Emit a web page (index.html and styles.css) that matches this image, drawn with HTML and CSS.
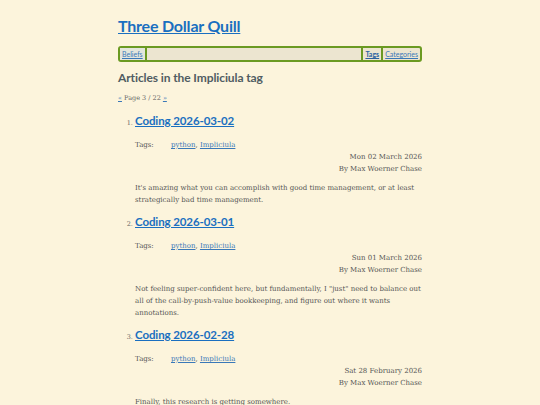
FILE: index.html
```html
<!DOCTYPE html>
<html>
<head>
<meta charset="utf-8">
<link rel="stylesheet" href="styles.css">
</head>
<body>
<div class="page">
  <header class="site-header">
    <a class="site-title" href="#">Three Dollar Quill</a>
  </header>
  <nav class="nav">
    <a class="nav-link first" href="#">Beliefs</a>
    <span class="nav-spacer"></span>
    <a class="nav-link current" href="#">Tags</a>
    <a class="nav-link last" href="#">Categories</a>
  </nav>
  <h1 class="tag-heading">Articles in the Impliciula tag</h1>
  <p class="pager"><a href="#">«</a> Page 3 / 22 <a href="#">»</a></p>
  <ol class="articles" start="1">
    <li class="article">
      <h2 class="article-title"><a href="#">Coding 2026-03-02</a></h2>
      <div class="tags"><span class="tags-label">Tags:</span><span><a href="#">python</a>, <a href="#">Impliciula</a></span></div>
      <div class="meta">Mon 02 March 2026<br>By Max Woerner Chase</div>
      <p class="summary">It's amazing what you can accomplish with good time management, or at least strategically bad time management.</p>
    </li>
    <li class="article">
      <h2 class="article-title"><a href="#">Coding 2026-03-01</a></h2>
      <div class="tags"><span class="tags-label">Tags:</span><span><a href="#">python</a>, <a href="#">Impliciula</a></span></div>
      <div class="meta">Sun 01 March 2026<br>By Max Woerner Chase</div>
      <p class="summary">Not feeling super-confident here, but fundamentally, I "just" need to balance out all of the call-by-push-value bookkeeping, and figure out where it wants annotations.</p>
    </li>
    <li class="article">
      <h2 class="article-title"><a href="#">Coding 2026-02-28</a></h2>
      <div class="tags"><span class="tags-label">Tags:</span><span><a href="#">python</a>, <a href="#">Impliciula</a></span></div>
      <div class="meta">Sat 28 February 2026<br>By Max Woerner Chase</div>
      <p class="summary">Finally, this research is getting somewhere.</p>
    </li>
  </ol>
</div>
</body>
</html>
```
FILE: styles.css
```css
html, body {
  margin: 0;
  padding: 0;
  background: #fcf4dc;
}
body {
  font-family: "DejaVu Serif", serif;
  color: #555;
}
.page {
  width: 304px;
  margin: 0 auto;
  padding-top: 15px;
}
.site-header {
  line-height: 22px;
}
.site-title {
  font-family: "Lato", "Open Sans", sans-serif;
  font-weight: 700;
  font-size: 16px;
  letter-spacing: -0.2px;
  color: #1a6fc0;
  text-decoration: underline;
}
.nav {
  margin-top: 8px;
  display: flex;
  align-items: stretch;
  height: 12px;
  border: 2px solid #6b9a22;
  border-radius: 3px;
  background: #ece5d0;
  font-family: "Lato", sans-serif;
  font-size: 7px;
  line-height: 12px;
}
.nav-link {
  color: #3a78b8;
  padding: 0 2px;
  border-right: 2px solid #6b9a22;
}
.nav-link.first {
  background: #e3e6dc;
}
.nav-spacer {
  flex: 1;
  border-right: 2px solid #6b9a22;
}
.nav-link.current {
  font-weight: 700;
  color: #2a62a0;
}
.nav-link.last {
  border-right: 0;
}
.tag-heading {
  margin: 8px 0 0;
  font-family: "Lato", sans-serif;
  font-size: 12px;
  letter-spacing: -0.1px;
  line-height: 16px;
  font-weight: 700;
  color: #505c62;
}
.pager {
  margin: 7px 0 0;
  font-size: 6.5px;
  line-height: 10px;
  color: #666;
}
.pager a {
  color: #3a78b8;
}
.articles {
  margin: 9px 0 0;
  padding-left: 17px;
  font-size: 6.5px;
}
.article {
  color: #666;
}
.article-title {
  margin: 0;
  font-family: "Lato", sans-serif;
  font-size: 11.5px;
  letter-spacing: -0.1px;
  line-height: 18px;
  font-weight: 700;
  display: inline;
}
.article-title a {
  color: #1a6fc0;
}
.tags {
  margin-top: 9px;
  display: flex;
  font-size: 7px;
  line-height: 12px;
  color: #555;
}
.tags-label {
  width: 36px;
}
.tags a {
  color: #3a78b8;
}
.meta {
  text-align: right;
  font-size: 7px;
  line-height: 12px;
  color: #555;
}
.summary {
  margin: 7px 0 7px;
  font-size: 7px;
  line-height: 12px;
  color: #555;
}
```
